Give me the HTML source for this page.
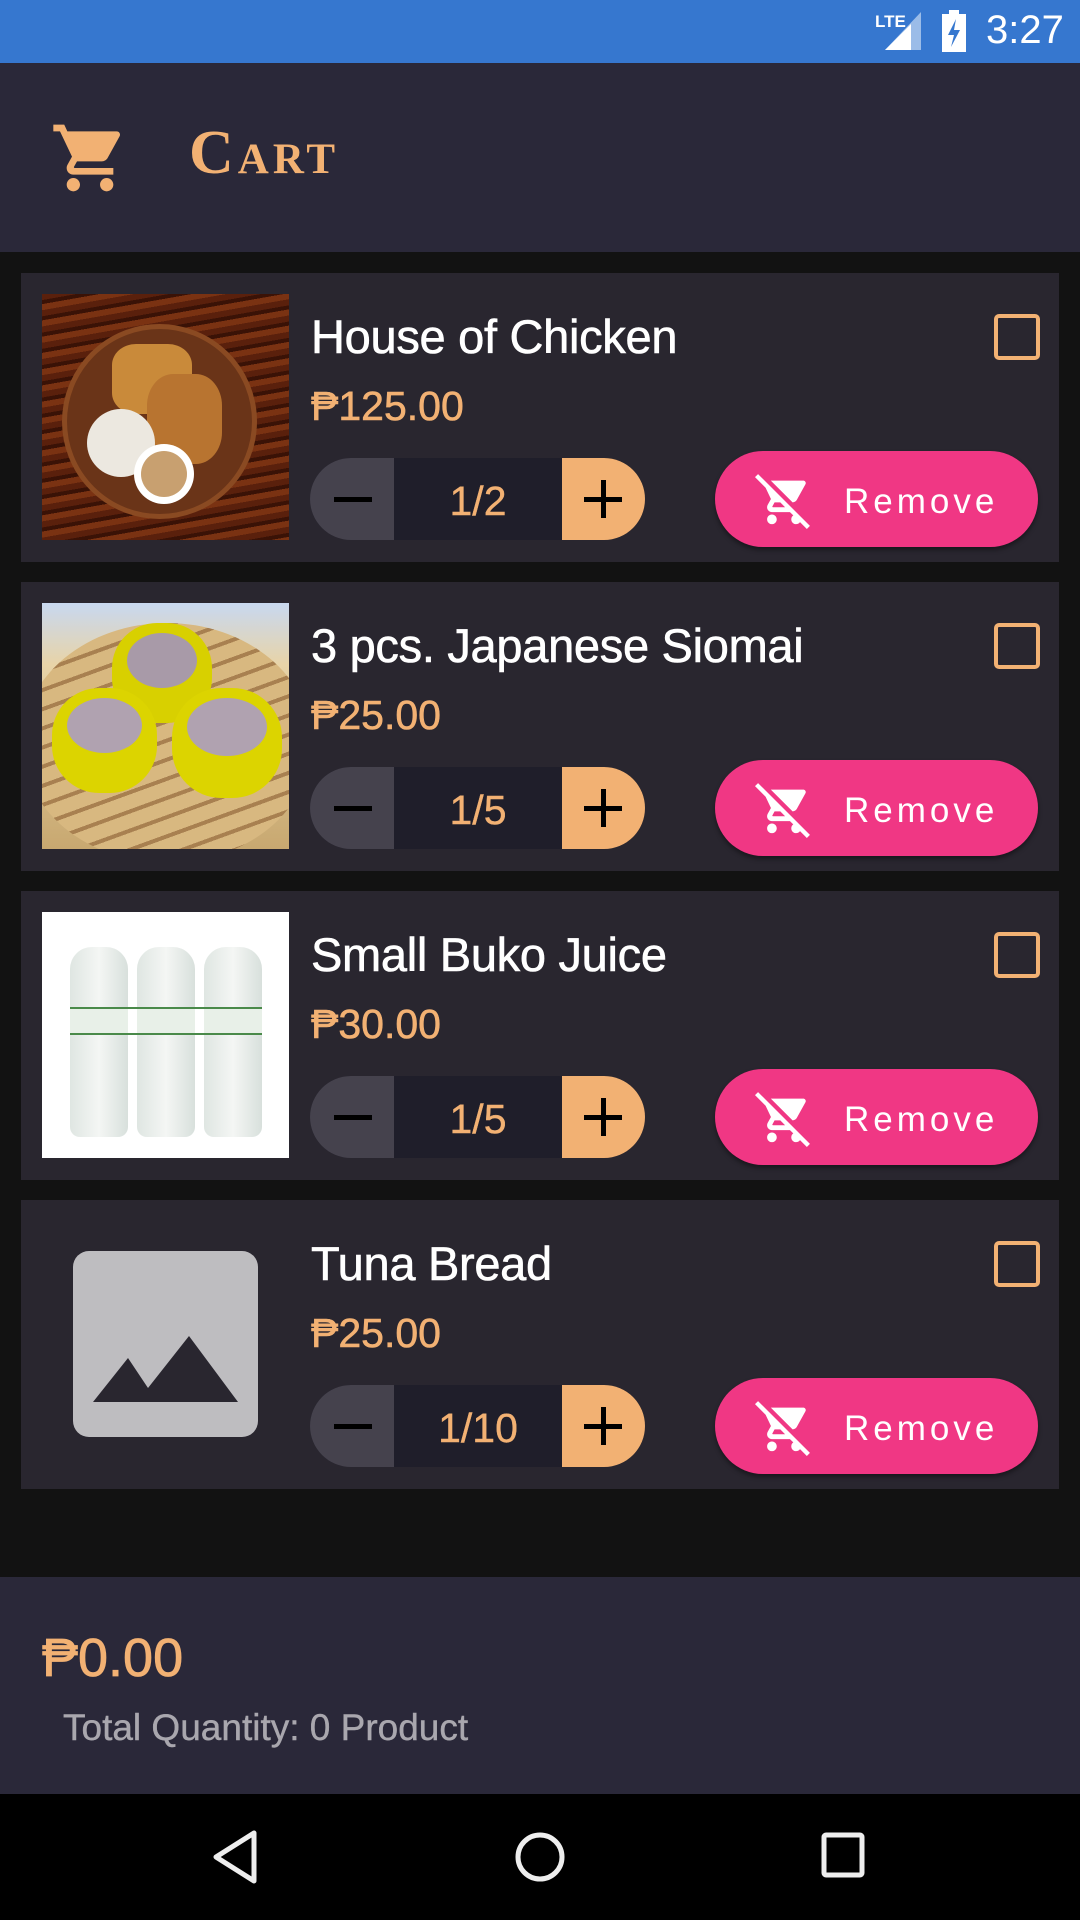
<!DOCTYPE html>
<html><head><meta charset="utf-8"><style>
*{margin:0;padding:0;box-sizing:border-box}
body{width:1080px;height:1920px;background:#121212;font-family:"Liberation Sans",sans-serif;position:relative;overflow:hidden}
.abs{position:absolute}
.status{left:0;top:0;width:1080px;height:63px;background:#3677CF}
.header{left:0;top:63px;width:1080px;height:189px;background:#2A2839}
.card{left:21px;width:1038px;height:289px;background:#29262F}
.img{left:21px;top:21px;width:247px;height:246px;overflow:hidden}
.title{left:290px;top:36px;color:#fff;font-size:47px;letter-spacing:-0.3px;-webkit-text-stroke:0.6px #fff}
.price{left:290px;top:110px;color:#F2B173;font-size:41px;-webkit-text-stroke:0.6px #F2B173}
.step{left:289px;top:185px;width:335px;height:82px;border-radius:41px;overflow:hidden;background:#1F1E2A}
.minus{left:0;top:0;width:84px;height:82px;background:#45424D}
.plus{left:252px;top:0;width:83px;height:82px;background:#F2B173}
.qty{left:84px;top:2px;width:168px;height:82px;line-height:82px;text-align:center;color:#F2B173;font-size:41px;-webkit-text-stroke:0.4px #F2B173}
.rm{left:694px;top:178px;width:323px;height:96px;border-radius:48px;background:#F03784;box-shadow:0 3px 5px rgba(0,0,0,.4)}
.rm span{position:absolute;left:129px;top:31px;color:#fff;font-size:35px;letter-spacing:4px}
.rm svg{position:absolute;left:40px;top:20px}
.cb{left:973px;top:41px;width:46px;height:46px;border:4px solid #F2B173;border-radius:5px}
</style></head><body>
<div class="abs status">
 <span class="abs" style="left:875px;top:12px;color:#fff;font-size:17px;font-weight:bold">LTE</span>
 <svg class="abs" style="left:885px;top:12px" width="36" height="38"><polygon points="36,0 36,38 0,38" fill="#9BBCE8"/><polygon points="26,12 26,38 0,38" fill="#fff"/></svg>
 <svg class="abs" style="left:942px;top:10px" width="24" height="42"><rect x="7" y="0" width="10" height="5" fill="#fff"/><rect x="0" y="4" width="24" height="38" fill="#fff"/><polygon points="14,9 6,25 12,25 9,37 18,20 12,20" fill="#3677CF"/></svg>
 <span class="abs" style="left:986px;top:8px;color:#fff;font-size:40px">3:27</span>
</div>
<div class="abs header">
 <svg class="abs" style="left:50px;top:55px" width="80" height="80" viewBox="0 0 24 24"><path fill="#F2B173" d="M7 18c-1.1 0-1.99.9-1.99 2S5.9 22 7 22s2-.9 2-2-.9-2-2-2zM1 2v2h2l3.6 7.59-1.35 2.450c-.16.28-.25.61-.25.96 0 1.1.9 2 2 2h12v-2H7.42c-.14 0-.25-.11-.25-.25l.03-.12.9-1.63h7.45c.75 0 1.41-.41 1.75-1.03l3.58-6.49A1.003 1.003 0 0020 4H5.21l-.94-2H1zm16 16c-1.1 0-1.99.9-1.99 2s.89 2 1.99 2 2-.9 2-2-.9-2-2-2z"/></svg>
 <span class="abs" style="left:189px;top:55px;color:#F2B173;font-size:62px;font-family:'Liberation Serif',serif;font-weight:bold;font-variant:small-caps;letter-spacing:4px">Cart</span>
</div>

<!-- card 1 -->
<div class="abs card" style="top:273px">
 <div class="abs img" style="background:repeating-linear-gradient(170deg,#5a200c 0 6px,#3a1206 6px 10px,#7a3212 10px 16px)">
  <div class="abs" style="left:20px;top:30px;width:195px;height:195px;border-radius:50%;background:#6a3418;border:5px solid #8a4a22"></div>
  <div class="abs" style="left:70px;top:50px;width:80px;height:70px;border-radius:30%;background:#c98a3a"></div>
  <div class="abs" style="left:105px;top:80px;width:75px;height:90px;border-radius:35%;background:#b87430"></div>
  <div class="abs" style="left:45px;top:115px;width:68px;height:68px;border-radius:50%;background:#ece8e0"></div>
  <div class="abs" style="left:92px;top:150px;width:60px;height:60px;border-radius:50%;background:#fff"><div class="abs" style="left:7px;top:7px;width:46px;height:46px;border-radius:50%;background:#c8a070"></div></div>
 </div>
 <div class="abs title">House of Chicken</div>
 <div class="abs price">₱125.00</div>
 <div class="abs cb"></div>
 <div class="abs step"><div class="abs minus"><div class="abs" style="left:24px;top:39px;width:38px;height:5px;background:#000"></div></div><div class="abs qty">1/2</div><div class="abs plus"><div class="abs" style="left:22px;top:39px;width:38px;height:5px;background:#000"></div><div class="abs" style="left:39px;top:22px;width:5px;height:38px;background:#000"></div></div></div>
 <div class="abs rm"><svg width="58" height="58" viewBox="0 0 24 24"><path fill="#fff" d="M22.73 22.73L2.77 2.77 2 2l-.73-.73L0 2.54l4.39 4.39 2.21 4.66-1.35 2.45c-.16.28-.25.61-.25.96 0 1.1.9 2 2 2h7.46l1.38 1.38c-.5.36-.83.95-.83 1.62 0 1.1.89 2 1.99 2 .67 0 1.26-.33 1.62-.84L21.46 24l1.27-1.27zM7.42 15c-.14 0-.25-.11-.25-.25l.03-.12.9-1.63h2.36l2 2H7.42zm8.13-2c.75 0 1.41-.41 1.75-1.03l3.58-6.49c.08-.14.12-.31.12-.48 0-.55-.45-1-1-1H6.54l9.01 9zM7 18c-1.1 0-1.99.9-1.99 2S5.9 22 7 22s2-.9 2-2-.9-2-2-2z"/></svg><span>Remove</span></div>
</div>

<!-- card 2 -->
<div class="abs card" style="top:582px">
 <div class="abs img" style="background:linear-gradient(180deg,#c8d8f0 0,#e8d4a8 25%,#c8a870 100%)">
  <div class="abs" style="left:-20px;top:20px;width:290px;height:240px;border-radius:50%;background:repeating-linear-gradient(160deg,#d8b880 0 14px,#a88050 14px 18px)"></div>
  <div class="abs" style="left:70px;top:20px;width:100px;height:100px;border-radius:45%;background:#d8d000"><div class="abs" style="left:15px;top:10px;width:70px;height:55px;border-radius:50%;background:#a89aa8"></div></div>
  <div class="abs" style="left:10px;top:85px;width:105px;height:105px;border-radius:45%;background:#dcd400"><div class="abs" style="left:15px;top:10px;width:75px;height:55px;border-radius:50%;background:#b0a2b0"></div></div>
  <div class="abs" style="left:130px;top:85px;width:110px;height:110px;border-radius:45%;background:#dcd400"><div class="abs" style="left:15px;top:10px;width:80px;height:58px;border-radius:50%;background:#b0a2b0"></div></div>
 </div>
 <div class="abs title">3 pcs. Japanese Siomai</div>
 <div class="abs price">₱25.00</div>
 <div class="abs cb"></div>
 <div class="abs step"><div class="abs minus"><div class="abs" style="left:24px;top:39px;width:38px;height:5px;background:#000"></div></div><div class="abs qty">1/5</div><div class="abs plus"><div class="abs" style="left:22px;top:39px;width:38px;height:5px;background:#000"></div><div class="abs" style="left:39px;top:22px;width:5px;height:38px;background:#000"></div></div></div>
 <div class="abs rm"><svg width="58" height="58" viewBox="0 0 24 24"><path fill="#fff" d="M22.73 22.73L2.77 2.77 2 2l-.73-.73L0 2.54l4.39 4.39 2.21 4.66-1.35 2.45c-.16.28-.25.61-.25.96 0 1.1.9 2 2 2h7.46l1.38 1.38c-.5.36-.83.95-.83 1.62 0 1.1.89 2 1.99 2 .67 0 1.26-.33 1.62-.84L21.46 24l1.27-1.27zM7.42 15c-.14 0-.25-.11-.25-.25l.03-.12.9-1.63h2.36l2 2H7.42zm8.13-2c.75 0 1.41-.41 1.75-1.03l3.58-6.49c.08-.14.12-.31.12-.48 0-.55-.45-1-1-1H6.54l9.01 9zM7 18c-1.1 0-1.99.9-1.99 2S5.9 22 7 22s2-.9 2-2-.9-2-2-2z"/></svg><span>Remove</span></div>
</div>

<!-- card 3 -->
<div class="abs card" style="top:891px">
 <div class="abs img" style="background:#fff">
  <div class="abs" style="left:28px;top:35px;width:58px;height:190px;border-radius:22px 22px 10px 10px;background:linear-gradient(90deg,#dfe6e2,#f4f6f4,#d8e0dc)"></div>
  <div class="abs" style="left:95px;top:35px;width:58px;height:190px;border-radius:22px 22px 10px 10px;background:linear-gradient(90deg,#dfe6e2,#f4f6f4,#d8e0dc)"></div>
  <div class="abs" style="left:162px;top:35px;width:58px;height:190px;border-radius:22px 22px 10px 10px;background:linear-gradient(90deg,#dfe6e2,#f4f6f4,#d8e0dc)"></div>
  <div class="abs" style="left:28px;top:95px;width:192px;height:28px;background:repeating-linear-gradient(90deg,#e8f0e8 0 58px,#fff 58px 67px);border-top:2px solid #4a8a4a;border-bottom:2px solid #4a8a4a"></div>
 </div>
 <div class="abs title">Small Buko Juice</div>
 <div class="abs price">₱30.00</div>
 <div class="abs cb"></div>
 <div class="abs step"><div class="abs minus"><div class="abs" style="left:24px;top:39px;width:38px;height:5px;background:#000"></div></div><div class="abs qty">1/5</div><div class="abs plus"><div class="abs" style="left:22px;top:39px;width:38px;height:5px;background:#000"></div><div class="abs" style="left:39px;top:22px;width:5px;height:38px;background:#000"></div></div></div>
 <div class="abs rm"><svg width="58" height="58" viewBox="0 0 24 24"><path fill="#fff" d="M22.73 22.73L2.77 2.77 2 2l-.73-.73L0 2.54l4.39 4.39 2.21 4.66-1.35 2.45c-.16.28-.25.61-.25.96 0 1.1.9 2 2 2h7.46l1.38 1.38c-.5.36-.83.95-.83 1.62 0 1.1.89 2 1.99 2 .67 0 1.26-.33 1.62-.84L21.46 24l1.27-1.27zM7.42 15c-.14 0-.25-.11-.25-.25l.03-.12.9-1.63h2.36l2 2H7.42zm8.13-2c.75 0 1.41-.41 1.75-1.03l3.58-6.49c.08-.14.12-.31.12-.48 0-.55-.45-1-1-1H6.54l9.01 9zM7 18c-1.1 0-1.99.9-1.99 2S5.9 22 7 22s2-.9 2-2-.9-2-2-2z"/></svg><span>Remove</span></div>
</div>

<!-- card 4 -->
<div class="abs card" style="top:1200px">
 <div class="abs" style="left:52px;top:51px;width:185px;height:186px;border-radius:16px;background:#BEBDC0">
  <svg class="abs" style="left:20px;top:85px" width="145" height="66"><polygon points="0,66 35,22 55,52 96,0 145,66" fill="#29262F"/></svg>
 </div>
 <div class="abs title">Tuna Bread</div>
 <div class="abs price">₱25.00</div>
 <div class="abs cb"></div>
 <div class="abs step"><div class="abs minus"><div class="abs" style="left:24px;top:39px;width:38px;height:5px;background:#000"></div></div><div class="abs qty">1/10</div><div class="abs plus"><div class="abs" style="left:22px;top:39px;width:38px;height:5px;background:#000"></div><div class="abs" style="left:39px;top:22px;width:5px;height:38px;background:#000"></div></div></div>
 <div class="abs rm"><svg width="58" height="58" viewBox="0 0 24 24"><path fill="#fff" d="M22.73 22.73L2.77 2.77 2 2l-.73-.73L0 2.54l4.39 4.39 2.21 4.66-1.35 2.45c-.16.28-.25.61-.25.96 0 1.1.9 2 2 2h7.46l1.38 1.38c-.5.36-.83.95-.83 1.62 0 1.1.89 2 1.99 2 .67 0 1.26-.33 1.62-.84L21.46 24l1.27-1.27zM7.42 15c-.14 0-.25-.11-.25-.25l.03-.12.9-1.63h2.36l2 2H7.42zm8.13-2c.75 0 1.41-.41 1.75-1.03l3.58-6.49c.08-.14.12-.31.12-.48 0-.55-.45-1-1-1H6.54l9.01 9zM7 18c-1.1 0-1.99.9-1.99 2S5.9 22 7 22s2-.9 2-2-.9-2-2-2z"/></svg><span>Remove</span></div>
</div>

<div class="abs" style="left:0;top:1577px;width:1080px;height:217px;background:#2A2839">
 <div class="abs" style="left:42px;top:50px;color:#F2B173;font-size:54px;-webkit-text-stroke:0.8px #F2B173">₱0.00</div>
 <div class="abs" style="left:63px;top:130px;color:#A9A7AE;font-size:37px;-webkit-text-stroke:0.4px #A9A7AE">Total Quantity: 0 Product</div>
</div>
<div class="abs" style="left:0;top:1794px;width:1080px;height:126px;background:#000">
 <svg class="abs" style="left:210px;top:35px" width="50" height="56"><polygon points="44,4 44,52 6,28" fill="none" stroke="#eee" stroke-width="5" stroke-linejoin="round"/></svg>
 <svg class="abs" style="left:513px;top:35px" width="54" height="56"><circle cx="27" cy="28" r="22" fill="none" stroke="#eee" stroke-width="5"/></svg>
 <svg class="abs" style="left:820px;top:37px" width="48" height="50"><rect x="4" y="4" width="38" height="40" rx="2" fill="none" stroke="#eee" stroke-width="5"/></svg>
</div>
</body></html>
